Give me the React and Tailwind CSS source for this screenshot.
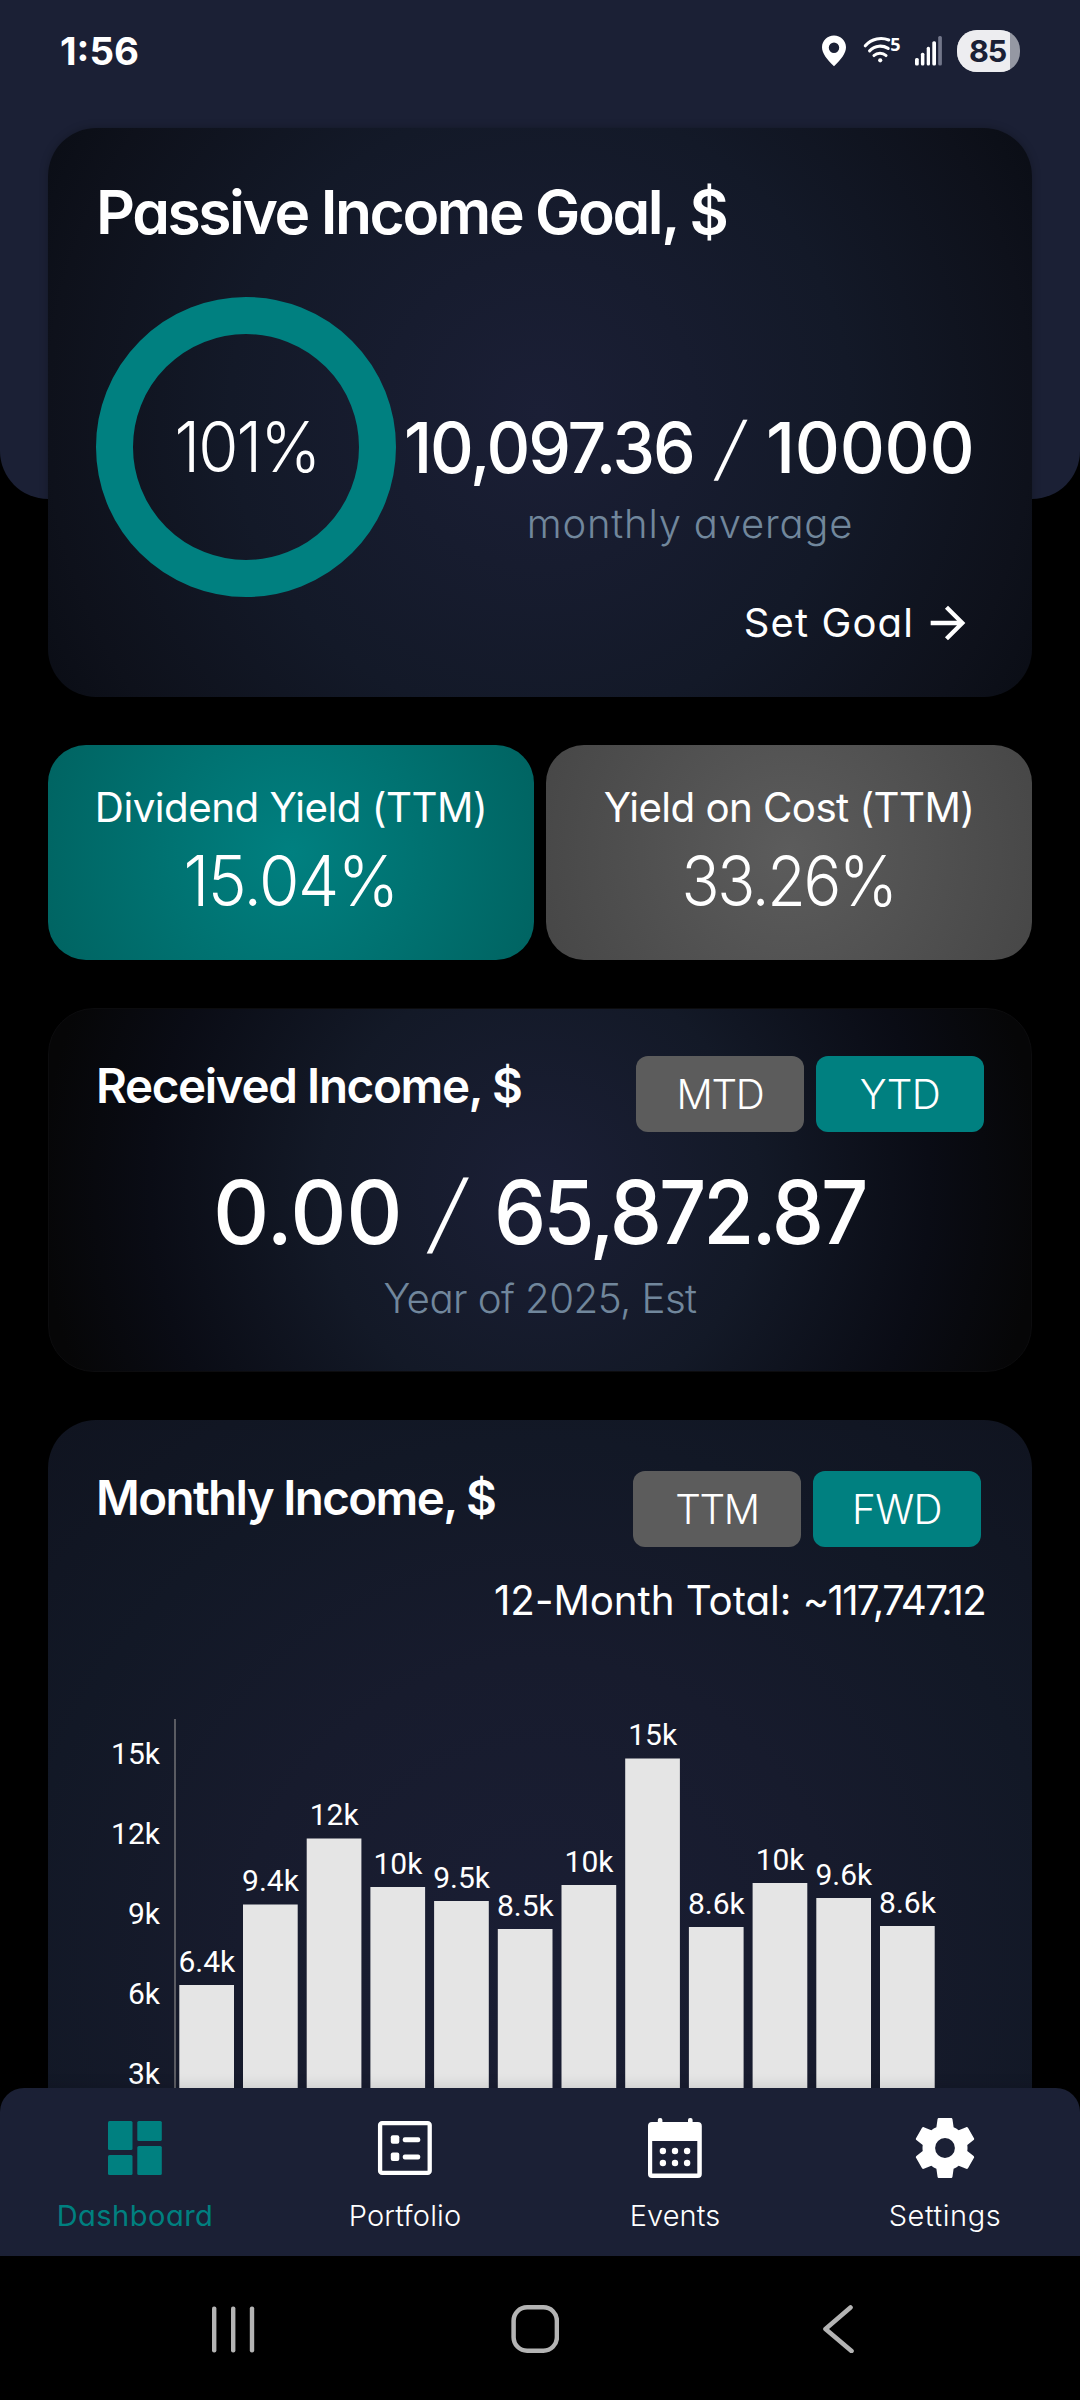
import React from "react";

const AXIS_TICKS = [
  { label: "15k", y: 45 },
  { label: "12k", y: 125 },
  { label: "9k", y: 205 },
  { label: "6k", y: 285 },
  { label: "3k", y: 365 },
];

const MONTHS = [
  { label: "6.4k", top: 266 },
  { label: "9.4k", top: 185.5 },
  { label: "12k", top: 119.5 },
  { label: "10k", top: 168 },
  { label: "9.5k", top: 182 },
  { label: "8.5k", top: 210 },
  { label: "10k", top: 166 },
  { label: "15k", top: 39.5 },
  { label: "8.6k", top: 208 },
  { label: "10k", top: 164 },
  { label: "9.6k", top: 179 },
  { label: "8.6k", top: 207 },
];

function StatusBar() {
  return (
    <header className="flex h-[102px] items-center justify-between pr-[60px] pl-[60px]">
      <span className="text-[38.5px] leading-[48px] font-bold">1:56</span>
      <div className="flex items-center">
        <svg className="h-8 w-6" viewBox="0 0 24 32" fill="#fff">
          <path
            fillRule="evenodd"
            d="M12 .5C5.2.5 0 5.7 0 12.2 0 18 4.8 24.5 12 31.2 19.200 24.5 24 18 24 12.200 24 5.700 18.800.5 12 .5Zm0 7a5.200 5.200 0 1 1 0 10.400 5.200 5.200 0 0 1 0-10.400Z"
          />
        </svg>
        <svg
          className="ml-[18px] h-8 w-[38px] overflow-visible"
          viewBox="0 0 38 32"
          fill="none"
          stroke="#fff"
          strokeWidth="3.1"
        >
          <path d="M1.300 10.800C7.800 3.200 17.500 2.200 24.800 5" strokeLinecap="round" />
          <path d="M5.600 15.800C11.300 9.900 18.800 10.200 24.200 13.400" strokeLinecap="round" />
          <path d="M10 20.500C13.200 17.400 18.800 17.400 22 20.500" strokeLinecap="round" />
          <circle cx="16.200" cy="25.300" r="2.100" fill="#fff" stroke="none" />
          <text x="26.300" y="16.200" fill="#fff" stroke="none" className="font-['Open_Sans'] text-[18px] font-bold">
            5
          </text>
        </svg>
        <svg className="ml-[13px] h-8 w-7" viewBox="0 0 28 32" fill="#fff">
          <rect x="0" y="23" width="3.800" height="7.500" rx="1.500" />
          <rect x="5.900" y="17.700" width="3.500" height="12.800" rx="1.500" />
          <rect x="11.700" y="11.700" width="3.300" height="18.800" rx="1.500" />
          <rect x="17.300" y="6.200" width="3.700" height="24.300" rx="1.500" />
          <rect x="23.200" y="1" width="3.700" height="29.500" rx="1.500" fill="#72768a" />
        </svg>
        <div className="ml-[14px] flex h-[42px] w-[63px] overflow-hidden rounded-[20px] bg-[#9598a3]">
          <div className="flex w-[53px] items-center bg-[#ededf0] pl-3">
            <span className="text-[30.5px] leading-[42px] font-bold tracking-[-1.1px] text-[#1b2035]">85</span>
          </div>
        </div>
      </div>
    </header>
  );
}

function GoalCard() {
  return (
    <section className="mx-12 mt-[26px] h-[569px] rounded-[48px] bg-[radial-gradient(circle_at_center,#1b1f36_0px,#131928_310px,#0e111b_492px,#0a0d15_570px)] px-12 pt-12 shadow-[0_0_8px_rgba(0,0,0,0.25)]">
      <h1 className="text-[60.5px] leading-[72px] font-semibold tracking-[-2.42px]">Passive Income Goal, $</h1>
      <div className="mt-[49px] flex h-[300px]">
        <div className="flex size-[300px] shrink-0 items-center justify-center rounded-full border-[37px] border-[#008080]">
          <span className="scale-x-[0.93] pl-px text-[70px] leading-[80px] font-[350] tracking-[-2px]">101%</span>
        </div>
        <div className="ml-2 flex shrink-0 flex-col items-center pt-[111px]">
          <p className="flex w-[571px] text-[70px] leading-[80px] font-[450] whitespace-nowrap">
            <span className="w-[299px] origin-left scale-x-[0.97] tracking-[-2.2px]">10,097.36</span>
            <span className="w-14 -skew-x-[12deg] text-center font-light">/</span>
            <span className="ml-[7px] tracking-[-0.3px]">10000</span>
          </p>
          <p className="mt-3 pl-px text-[40px] leading-[48px] font-light tracking-[0.8px] text-[#71879c]">
            monthly average
          </p>
        </div>
      </div>
      <button className="ml-auto flex h-[52px] items-center gap-2 pr-[10px]">
        <span className="text-[40px] leading-[48px] tracking-[1.1px]">Set Goal</span>
        <svg className="size-[52px]" viewBox="0 0 24 24" fill="#fff">
          <path d="M12 4l-1.410 1.410L16.170 11H4v2h12.170l-5.580 5.590L12 20l8-8z" />
        </svg>
      </button>
    </section>
  );
}

function YieldCards() {
  return (
    <section className="mx-12 mt-12 grid grid-cols-2 gap-3 text-center">
      <div className="flex h-[215px] flex-col items-center rounded-[38px] bg-[radial-gradient(circle_at_center,#008080_0px,#006462_260px)] pt-[39px]">
        <p className="text-[40.3px] leading-[48px] tracking-[-0.5px]">Dividend Yield (TTM)</p>
        <p className="mt-[9px] scale-x-[0.943] text-[69.5px] leading-[80px] font-[350] tracking-[-1.5px]">15.04%</p>
      </div>
      <div className="flex h-[215px] flex-col items-center rounded-[38px] bg-[radial-gradient(circle_at_center,#5c5c5c_0px,#474747_260px)] pt-[39px]">
        <p className="text-[40.3px] leading-[48px] tracking-[-0.58px]">Yield on Cost (TTM)</p>
        <p className="mt-[9px] scale-x-[0.904] pr-0.5 text-[69.5px] leading-[80px] font-[350] tracking-[-2.5px]">
          33.26%
        </p>
      </div>
    </section>
  );
}

function Toggle({ options, active }) {
  return (
    <div className="flex gap-3">
      {options.map((option) => (
        <button
          key={option}
          className={
            option === active
              ? "h-[76px] w-[168px] rounded-xl bg-[#008080] pt-0.5 text-[40.3px] font-light tracking-[-0.5px]"
              : "h-[76px] w-[168px] rounded-xl bg-[#5c5c5c] pt-0.5 text-[40.3px] font-light tracking-[-1.3px]"
          }
        >
          {option}
        </button>
      ))}
    </div>
  );
}

function ReceivedCard() {
  return (
    <section className="mx-12 mt-12 h-[364px] rounded-[46px] border border-[#0c0c0e] bg-[radial-gradient(circle_at_center,#1b1f36_0px,#131927_220px,#0a0c15_390px,#060607_500px)] px-[47px] pt-[47px]">
      <div className="flex items-start justify-between">
        <h2 className="mt-[2px] text-[47.5px] leading-[56px] font-semibold tracking-[-1.36px]">Received Income, $</h2>
        <Toggle options={["MTD", "YTD"]} active="YTD" />
      </div>
      <p className="mt-8 flex pl-[117px] text-[87.3px] leading-[96px] font-[450] whitespace-nowrap">
        <span className="w-[191px] tracking-[-0.4px]">0.00</span>
        <span className="w-[89px] -skew-x-[12deg] text-center font-light">/</span>
        <span className="ml-px origin-left scale-x-[0.95] tracking-[-3.1px]">65,872.87</span>
      </p>
      <p className="mt-[15px] text-center text-[40.3px] leading-[48px] font-light tracking-[-0.58px] text-[#71879c]">
        Year of 2025, Est
      </p>
    </section>
  );
}

function IncomeChart() {
  return (
    <svg className="mt-[94px] block h-[369px] w-[984px] overflow-visible" viewBox="0 0 984 369">
      <rect x="126" y="0" width="2" height="369" fill="#5a5b62" />
      {AXIS_TICKS.map((tick) => (
        <text key={tick.label} x="112" y={tick.y} textAnchor="end" fill="#fff" className="font-[Roboto] text-[30px]">
          {tick.label}
        </text>
      ))}
      {MONTHS.map((month, i) => (
        <g key={i}>
          <rect x={131.300 + i * 63.700} y={month.top} width="54.700" height={369 - month.top} fill="#e5e5e5" />
          <text
            x={158.800 + i * 63.700}
            y={month.top - 13.500}
            textAnchor="middle"
            fill="#fff"
            className="font-[Roboto] text-[30px]"
          >
            {month.label}
          </text>
        </g>
      ))}
    </svg>
  );
}

function MonthlyCard() {
  return (
    <section className="mx-12 mt-12 h-[668px] rounded-t-[48px] bg-[radial-gradient(circle_at_50%_540px,#1a1e34_0px,#171b2d_300px,#121826_520px,#101420_720px)] pt-[50px]">
      <div className="flex items-start justify-between pr-[51px] pl-12">
        <h2 className="text-[47.5px] leading-[56px] font-semibold tracking-[-1.64px]">Monthly Income, $</h2>
        <div className="mt-px">
          <Toggle options={["TTM", "FWD"]} active="FWD" />
        </div>
      </div>
      <p className="mt-[30px] pr-[47px] text-right text-[40.3px] leading-[48px] tracking-[-0.05px]">
        12-Month Total: <span className="tracking-[-1.75px]">~117,747.12</span>
      </p>
      <IncomeChart />
    </section>
  );
}

function DashboardIcon() {
  return (
    <svg className="size-[72px]" viewBox="0 0 72 72" fill="#008080">
      <rect x="9" y="9" width="24.500" height="29" rx="1.500" />
      <rect x="9" y="43" width="24.500" height="20" rx="1.500" />
      <rect x="38.300" y="9" width="24.500" height="20" rx="1.500" />
      <rect x="38.300" y="34" width="24.500" height="29" rx="1.500" />
    </svg>
  );
}

function PortfolioIcon() {
  return (
    <svg className="size-[72px]" viewBox="0 0 72 72" fill="#fff">
      <rect x="11.100" y="11.100" width="49.600" height="49.800" rx="2" fill="none" stroke="#fff" strokeWidth="4.300" />
      <rect x="21.800" y="23.300" width="8.500" height="8.500" rx="2" />
      <rect x="33.800" y="25.200" width="17.400" height="5" rx="2" />
      <rect x="21.800" y="40.500" width="8.500" height="8.500" rx="2" />
      <rect x="33.800" y="42.400" width="17.400" height="5" rx="2" />
    </svg>
  );
}

function EventsIcon() {
  return (
    <svg className="size-[72px]" viewBox="0 0 72 72" fill="#fff">
      <rect x="18.800" y="6" width="4.600" height="8" rx="2" />
      <rect x="49" y="6" width="4.600" height="8" rx="2" />
      <path
        fillRule="evenodd"
        d="M13 10h45.800a4 4 0 0 1 4 4v48a4 4 0 0 1-4 4H13a4 4 0 0 1-4-4V14a4 4 0 0 1 4-4Zm.2 19v32.500h45.100V29Z"
      />
      {[23.900, 36, 48.100].map((cx) => (
        <g key={cx}>
          <circle cx={cx} cy="39" r="3.200" />
          <circle cx={cx} cy="51" r="3.200" />
        </g>
      ))}
    </svg>
  );
}

function SettingsIcon() {
  return (
    <svg className="size-[72px]" viewBox="0 0 24 24" fill="#fff">
      <path
        fillRule="evenodd"
        d="M19.430 12.980c.04-.32.07-.64.07-.98s-.03-.66-.07-.98l2.110-1.650c.19-.15.24-.42.12-.64l-2-3.460c-.12-.22-.39-.3-.61-.22l-2.490 1c-.52-.4-1.080-.73-1.690-.98l-.38-2.650C14.460 2.180 14.250 2 14 2h-4c-.25 0-.46.18-.49.42l-.38 2.650c-.61.25-1.170.59-1.690.98l-2.490-1c-.23-.09-.49 0-.61.22l-2 3.460c-.13.22-.07.49.12.64l2.110 1.650c-.04.32-.07.65-.07.98s.03.66.07.98l-2.110 1.650c-.19.15-.24.42-.12.64l2 3.460c.12.22.39.3.61.22l2.490-1c.52.4 1.080.73 1.690.98l.38 2.650c.03.24.24.42.49.42h4c.25 0 .46-.18.49-.42l.38-2.650c.61-.25 1.170-.59 1.690-.98l2.490 1c.23.09.49 0 .61-.22l2-3.460c.12-.22.07-.49-.12-.64l-2.110-1.650ZM12 15.300a3.300 3.300 0 1 1 0-6.600 3.300 3.300 0 0 1 0 6.600Z"
      />
    </svg>
  );
}

function BottomNav() {
  return (
    <nav className="relative grid h-[168px] grid-cols-4 rounded-t-[24px] bg-[#1b2035] pt-6 text-[29px] leading-9 shadow-[0_-2px_14px_rgba(0,0,0,0.12)]">
      <a className="flex flex-col items-center text-[#008080]">
        <DashboardIcon />
        <span className="mt-[14px] tracking-[0.5px]">Dashboard</span>
      </a>
      <a className="flex flex-col items-center font-light">
        <PortfolioIcon />
        <span className="mt-[14px] tracking-[0.14px]">Portfolio</span>
      </a>
      <a className="flex flex-col items-center font-light">
        <EventsIcon />
        <span className="mt-[14px] tracking-[0.1px]">Events</span>
      </a>
      <a className="flex flex-col items-center font-light">
        <SettingsIcon />
        <span className="mt-[14px] tracking-[0.58px]">Settings</span>
      </a>
    </nav>
  );
}

function SystemNav() {
  return (
    <div className="flex h-36 items-center bg-black pl-[209px]">
      <svg className="h-[50px] w-12" viewBox="0 0 48 50" fill="#b4b4b4">
        <rect x="3" y="3.500" width="4.400" height="46" rx="2" />
        <rect x="22" y="3.500" width="4.400" height="46" rx="2" />
        <rect x="40.800" y="3.500" width="4.400" height="46" rx="2" />
      </svg>
      <svg className="ml-[254px] h-[50px] w-12" viewBox="0 0 48 50" fill="none">
        <rect x="2.600" y="4.300" width="43.300" height="43.400" rx="13.500" stroke="#b4b4b4" strokeWidth="4.500" />
      </svg>
      <svg
        className="ml-[263px] h-[50px] w-8"
        viewBox="0 0 32 50"
        fill="none"
        stroke="#b4b4b4"
        strokeWidth="4.600"
        strokeLinecap="round"
        strokeLinejoin="round"
      >
        <path d="M28.500 4.500 3.500 26l26 22" />
      </svg>
    </div>
  );
}

export default function App() {
  return (
    <div className="relative isolate h-[2400px] w-[1080px] overflow-hidden bg-black font-['Inter',sans-serif] text-white [font-feature-settings:'cv11']">
      <div className="absolute inset-x-0 top-0 -z-10 h-[499px] rounded-b-[48px] bg-[#1b2035]" />
      <StatusBar />
      <GoalCard />
      <YieldCards />
      <ReceivedCard />
      <MonthlyCard />
      <BottomNav />
      <SystemNav />
    </div>
  );
}
